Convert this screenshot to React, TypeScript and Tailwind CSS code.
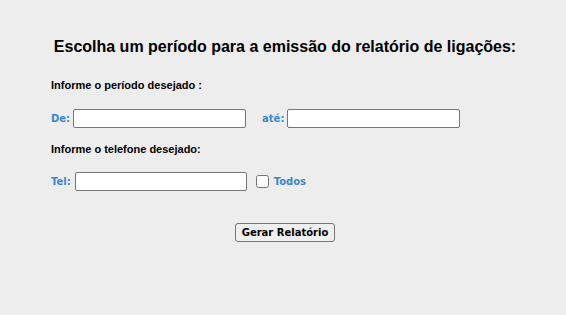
export default function App() {
  const lbl = "font-bold text-[10px] text-[#3b87d5] [font-family:'DejaVu_Sans',Verdana,sans-serif]";
  const inp = "h-[19px] border border-[#767676] rounded-[2px] bg-white outline-none";
  return (
    <div className="w-[566px] h-[315px] bg-[#ededed] [font-family:'Liberation_Sans',Arial,sans-serif] text-black">
      <div className="pt-[38px] pl-[4px] text-center text-[16px] font-bold leading-[18px]">
        Escolha um período para a emissão do relatório de ligações:
      </div>
      <div className="pl-[51px] mt-[23px]">
        <div className="text-[11px] font-bold leading-[13px]">Informe o período desejado :</div>
        <div className="flex items-center mt-[17px] h-[19px]">
          <span className={lbl}>De:</span>
          <input className={`${inp} ml-[3px] w-[173px]`} />
          <span className={`${lbl} ml-[16px]`}>até:</span>
          <input className={`${inp} ml-[3px] w-[173px]`} />
        </div>
        <div className="text-[11px] font-bold leading-[13px] mt-[15px]">Informe o telefone desejado:</div>
        <div className="flex items-center mt-[16px] h-[19px]">
          <span className={lbl}>Tel:</span>
          <input className={`${inp} ml-[4px] w-[172px]`} />
          <input type="checkbox" className="ml-[9px] w-[13px] h-[13px] m-0" />
          <span className={`${lbl} ml-[5px]`}>Todos</span>
        </div>
      </div>
      <div className="flex justify-center pl-[4px] mt-[32px]">
        <button className="h-[19px] w-[100px] border border-[#767676] rounded-[3px] bg-[#efefef] text-[10px] font-bold [font-family:'DejaVu_Sans',Verdana,sans-serif] leading-none">
          Gerar Relatório
        </button>
      </div>
    </div>
  );
}
